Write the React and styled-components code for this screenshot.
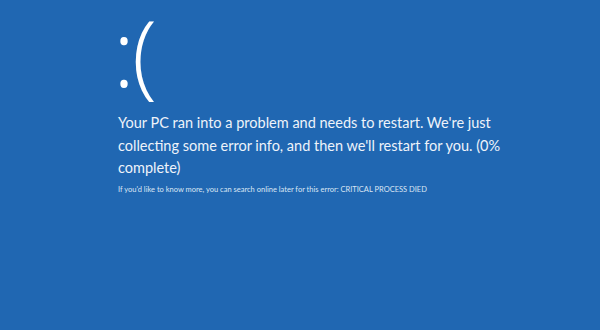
import React from 'react'
import styled, {createGlobalStyle} from 'styled-components'

const GlobalStyle = createGlobalStyle`
  html, body {
    margin: 0;
    padding: 0;
    background: #2067b2;
  }
`

export default function App () {
  return (
    <Screen>
      <GlobalStyle />
      <Content>
        <Frown>:(</Frown>
        <Message>
          Your PC ran into a problem and needs to restart. We're just<br />
          collecting some error info, and then we'll restart for you. (0%<br />
          complete)
        </Message>
        <Details>
          If you'd like to know more, you can search online later for this error: CRITICAL PROCESS DIED
        </Details>
      </Content>
    </Screen>
  )
}

const Screen = styled.div`
  width: 600px;
  height: 330px;
  background: #2067b2;
  color: #fff;
  font-family: Lato, "Open Sans", sans-serif;
  overflow: hidden;
`

const Content = styled.div`
  display: flex;
  flex-direction: column;
  align-items: flex-start;
  padding: 0 0 0 118px;
`

const Frown = styled.div`
  font-family: "Open Sans", sans-serif;
  font-size: 92px;
  font-weight: 300;
  line-height: 128px;
  letter-spacing: -3px;
  margin: -12px 0 0 -5px;
  padding-right: 8px;
`

const Message = styled.p`
  margin: -4px 0 0;
  font-size: 14.5px;
  font-weight: 400;
  line-height: 22.5px;
  color: #eef3fa;
  white-space: nowrap;
`

const Details = styled.p`
  margin: 5px 0 0;
  font-size: 7.5px;
  line-height: 10px;
  color: #dbe6f4;
  white-space: nowrap;
`
